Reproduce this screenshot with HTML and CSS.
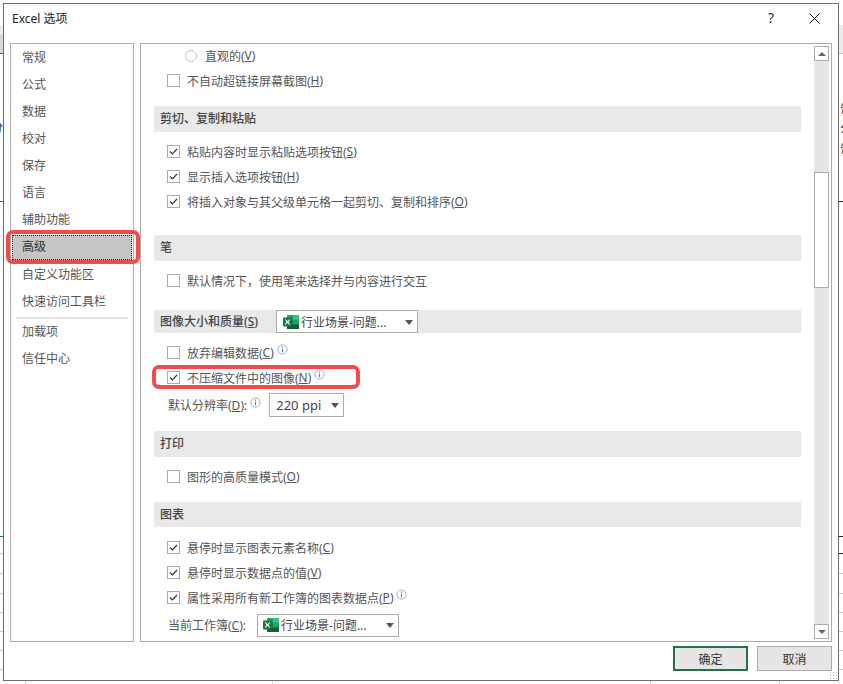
FILE: index.html

```html
<!DOCTYPE html>
<html lang="zh-CN">
<head>
  <meta charset="UTF-8">
  <title>Excel 选项</title>
  <link rel="stylesheet" href="styles.css">
</head>
<body>
  <svg class="defs" width="0" height="0">
    <symbol id="info" viewBox="0 0 11 11">
      <circle cx="5.5" cy="5.5" r="4.6" fill="#fff" stroke="#8fb0de"/>
      <path d="M5.5 2.6v1.2M5.5 4.8v3.4" stroke="#4f7fc4" stroke-width="1.1" fill="none"/>
    </symbol>
    <symbol id="xl" viewBox="0 0 16 16">
      <rect x="4" y="1" width="12" height="14" rx="1" fill="#21a366"/>
      <rect x="10" y="1" width="6" height="4.7" fill="#33c481"/>
      <rect x="4" y="5.7" width="6" height="4.6" fill="#107c41"/>
      <rect x="10" y="10.3" width="6" height="4.7" fill="#185c37"/>
      <rect x="4" y="10.3" width="6" height="4.7" fill="#185c37"/>
      <rect x="0" y="3.5" width="9" height="9" rx="1" fill="#107c41"/>
      <path d="M2.3 5.5l2.2 2.9 2.2-2.9M2.3 10.5l2.2-2.9 2.2 2.9" fill="none" stroke="#fff" stroke-width="1.1"/>
    </symbol>
  </svg>

  <div class="sheet">
    <div class="sheet-sides">
      <div class="edge edge-left">
        <div></div>
        <div class="ribbon-light"></div>
        <div class="ribbon-dark line-green"></div>
        <div class="line-green"><span class="stray stray-left">分</span></div>
        <div class="line-green"></div>
        <div class="line-gray"></div>
        <div class="line-gray"></div>
        <div class="line-gray"></div>
        <div class="line-gray"></div>
        <div class="line-gray"></div>
        <div class="line-gray"></div>
        <div class="line-gray"></div>
      </div>
      <div class="edge edge-right">
        <div></div>
        <div class="ribbon-light"></div>
        <div class="ribbon-light line-gray"></div>
        <div class="line-dark"><span class="stray stray-right">告公告</span></div>
        <div class="line-dark"></div>
        <div class="line-dark"></div>
        <div class="line-gray"></div>
        <div class="line-gray"></div>
        <div class="line-gray"></div>
        <div class="line-gray"></div>
        <div class="line-gray"></div>
        <div class="line-gray"></div>
      </div>
    </div>
    <div class="sheet-ticks"></div>
  </div>

  <div class="dialog">
    <header class="titlebar">
      <span class="title">Excel 选项</span>
      <span class="help">?</span>
      <svg class="close" width="11" height="11" viewBox="0 0 11 11"><path d="M.5.5l10 10M10.5.5l-10 10" stroke="#111" fill="none"/></svg>
    </header>

    <div class="body">
      <nav class="nav">
        <a>常规</a>
        <a>公式</a>
        <a>数据</a>
        <a>校对</a>
        <a>保存</a>
        <a>语言</a>
        <a>辅助功能</a>
        <a class="active"><span>高级</span></a>
        <a class="after-active">自定义功能区</a>
        <a>快速访问工具栏</a>
        <hr>
        <a>加载项</a>
        <a>信任中心</a>
        <i class="mark mark-nav"></i>
      </nav>

      <main class="pane">
        <div class="options">
          <label class="row row-sub"><i class="radio"></i>直观的(<u>V</u>)</label>
          <label class="row"><i class="check"></i>不自动超链接屏幕截图(<u>H</u>)</label>

          <h4 class="section">剪切、复制和粘贴</h4>
          <label class="row"><i class="check on"></i>粘贴内容时显示粘贴选项按钮(<u>S</u>)</label>
          <label class="row"><i class="check on"></i>显示插入选项按钮(<u>H</u>)</label>
          <label class="row"><i class="check on"></i>将插入对象与其父级单元格一起剪切、复制和排序(<u>O</u>)</label>

          <h4 class="section section-pen">笔</h4>
          <label class="row"><i class="check"></i>默认情况下，使用笔来选择并与内容进行交互</label>

          <h4 class="section section-image">
            <span class="section-label">图像大小和质量(<u>S</u>)</span>
            <span class="combo combo-image"><svg class="xl" width="16" height="16"><use href="#xl"/></svg>行业场景-问题...</span>
          </h4>
          <label class="row"><i class="check"></i>放弃编辑数据(<u>C</u>)<svg class="info" width="11" height="11"><use href="#info"/></svg></label>
          <label class="row"><i class="check on"></i>不压缩文件中的图像(<u>N</u>)<svg class="info" width="11" height="11"><use href="#info"/></svg></label>
          <div class="row row-field">默认分辨率(<u>D</u>):<svg class="info" width="11" height="11"><use href="#info"/></svg><span class="combo combo-ppi">220 ppi</span></div>

          <h4 class="section">打印</h4>
          <label class="row"><i class="check"></i>图形的高质量模式(<u>O</u>)</label>

          <h4 class="section section-chart">图表</h4>
          <label class="row"><i class="check on"></i>悬停时显示图表元素名称(<u>C</u>)</label>
          <label class="row"><i class="check on"></i>悬停时显示数据点的值(<u>V</u>)</label>
          <label class="row"><i class="check on"></i>属性采用所有新工作簿的图表数据点(<u>P</u>)<svg class="info" width="11" height="11"><use href="#info"/></svg></label>
          <div class="row row-field row-book">当前工作簿(<u>C</u>):<span class="combo combo-book"><svg class="xl" width="16" height="16"><use href="#xl"/></svg>行业场景-问题...</span></div>
          <i class="mark mark-row"></i>
        </div>

        <div class="scrollbar">
          <span class="arrow-btn"><i class="tri-up"></i></span>
          <span class="thumb"></span>
          <span class="arrow-btn arrow-down"><i class="tri-down"></i></span>
        </div>
      </main>
    </div>

    <footer class="footer">
      <button class="btn btn-ok">确定</button>
      <button class="btn">取消</button>
      <i class="grip"></i>
    </footer>
  </div>
</body>
</html>
```

FILE: styles.css

```css
* {
  box-sizing: border-box;
}

body {
  margin: 0;
  width: 843px;
  height: 684px;
  overflow: hidden;
  background: #fff;
  color: #444;
  font-family: "Noto Sans", "Noto Sans CJK SC", sans-serif;
  font-size: 12px;
}

.defs {
  display: block;
  height: 0;
}

/* the worksheet behind the dialog */
.sheet {
  height: 684px;
}

.sheet-sides {
  display: flex;
  justify-content: space-between;
  height: 681px;
}

.edge {
  display: grid;
  grid-template-rows: 25px 10px 19px 148px 335px 17px 20px 20px 19px 19px 19px 19px;
  overflow: hidden;
}

.edge-left {
  width: 3px;
}

.edge-right {
  width: 4px;
}

.ribbon-light {
  background: #ececec;
}

.ribbon-dark {
  background: #d8d8d8;
}

.line-green {
  border-bottom: 1px solid #217346;
}

.line-gray {
  border-bottom: 1px solid #c8c8c8;
}

.line-dark {
  border-bottom: 1px solid #222;
}

.stray {
  display: block;
  color: #222;
  font-size: 12px;
  line-height: 20px;
}

.stray-left {
  width: 12px;
  margin: 64px 0 0 -9px;
}

.stray-right {
  width: 12px;
  margin: 45px 0 0 1px;
}

.sheet-ticks {
  height: 3px;
  background:
    linear-gradient(#d4d4d4, #d4d4d4) 25px 0 / 1px 100% no-repeat,
    linear-gradient(#d4d4d4, #d4d4d4) 272px 0 / 1px 100% no-repeat,
    linear-gradient(#d4d4d4, #d4d4d4) 650px 0 / 1px 100% no-repeat,
    linear-gradient(#d4d4d4, #d4d4d4) 779px 0 / 1px 100% no-repeat;
}

/* dialog window */
.dialog {
  position: absolute;
  left: 3px;
  top: 3px;
  width: 836px;
  height: 678px;
  display: flex;
  flex-direction: column;
  background: #fff;
  border: 1px solid #6d6d6d;
}

.titlebar {
  display: flex;
  align-items: center;
  height: 39px;
  padding: 0 18px 11px 8px;
  flex: none;
}

.title {
  flex: 1;
  color: #222;
  font-size: 12px;
}

.help {
  margin: -1px 35px 0 0;
  color: #333;
  font-size: 14px;
}

.close {
  display: block;
}

.body {
  display: flex;
  gap: 6px;
  height: 599px;
  padding: 0 6px;
  flex: none;
}

/* left category list */
.nav {
  position: relative;
  width: 124px;
  flex: none;
  padding: 1px;
  border: 1px solid #ababab;
}

.nav a {
  display: block;
  height: 27px;
  padding-left: 10px;
  line-height: 26px;
  color: #555;
}

.nav hr {
  height: 2px;
  margin: 1px 4px 0;
  border: 0;
  background: #e6e6e6;
}

.nav .active {
  height: 25px;
  margin-top: 1px;
  padding: 0;
  background: #c6c5c3;
  color: #333;
}

.nav .active span {
  display: block;
  height: 100%;
  padding-left: 9px;
  line-height: 22px;
  border: 1px dotted #222;
}

.nav .after-active {
  margin-top: 2px;
}

.mark {
  position: absolute;
  border: 4px solid #f04c4c;
  border-radius: 7px;
}

.mark-nav {
  left: -5px;
  top: 186px;
  width: 134px;
  height: 34px;
}

/* right options pane */
.pane {
  position: relative;
  flex: 1;
  border: 1px solid #ababab;
  overflow: hidden;
}

.options {
  position: relative;
  width: 660px;
  padding-left: 13px;
}

.row {
  display: flex;
  align-items: center;
  height: 25px;
  padding: 0 0 2px 13px;
  color: #555;
  white-space: nowrap;
}

.row-sub {
  padding-left: 31px;
}

.row-field {
  height: 28px;
  padding: 0 0 0 14px;
}

.row-book {
  height: 28px;
}

.check {
  width: 13px;
  height: 13px;
  margin-right: 7px;
  border: 1px solid #ababab;
  background: #fff;
  flex: none;
}

.check.on {
  background: no-repeat center / 9px 9px url("data:image/svg+xml,%3Csvg xmlns='http://www.w3.org/2000/svg' viewBox='0 0 9 9'%3E%3Cpath d='M1 4.5l2.4 2.4L8 2' fill='none' stroke='%23333' stroke-width='1.2'/%3E%3C/svg%3E");
}

.radio {
  width: 12px;
  height: 12px;
  margin-right: 8px;
  border: 1px solid #c4c4c4;
  border-radius: 50%;
  flex: none;
}

.info {
  margin: -6px 0 0 3px;
  flex: none;
}

.section {
  display: flex;
  align-items: center;
  height: 26px;
  margin: 12px 0 8px;
  padding: 0 0 2px 6px;
  width: 647px;
  background: #e9e9e9;
  color: #444;
  font-size: 12px;
  font-weight: 500;
}

.section-pen {
  margin-top: 20px;
}

.section-image {
  height: 23px;
  margin-top: 16px;
  padding-bottom: 0;
}

.section-chart {
  height: 25px;
  margin-bottom: 9px;
}

.section-label {
  width: 116px;
  padding-bottom: 2px;
  flex: none;
}

.combo {
  position: relative;
  display: flex;
  align-items: center;
  background: #fff;
  border: 1px solid #ababab;
  color: #444;
  font-weight: 400;
  white-space: nowrap;
}

.combo::after {
  content: "";
  position: absolute;
  right: 4px;
  top: 50%;
  margin-top: -2px;
  border: 4px solid transparent;
  border-top: 5px solid #555;
  border-bottom: 0;
}

.combo-image {
  width: 142px;
  height: 23px;
  padding-left: 6px;
}

.combo-ppi {
  width: 75px;
  height: 24px;
  margin-left: 8px;
  padding-left: 6px;
  font-size: 13px;
}

.combo-book {
  width: 142px;
  height: 23px;
  margin-left: 11px;
  padding-left: 5px;
}

.xl {
  margin-right: 2px;
  flex: none;
}

.mark-row {
  left: 11px;
  top: 321px;
  width: 208px;
  height: 24px;
}

.scrollbar {
  position: absolute;
  right: 2px;
  top: 2px;
  bottom: 2px;
  width: 15px;
  background: #e6e6e6;
}

.arrow-btn {
  display: flex;
  align-items: center;
  justify-content: center;
  width: 15px;
  height: 15px;
  background: #fff;
  border: 1px solid #ababab;
}

.arrow-down {
  position: absolute;
  bottom: 0;
}

.tri-up {
  border: 4px solid transparent;
  border-bottom: 4px solid #666;
  border-top: 0;
}

.tri-down {
  border: 4px solid transparent;
  border-top: 4px solid #666;
  border-bottom: 0;
}

.thumb {
  position: absolute;
  left: 0;
  top: 126px;
  width: 15px;
  height: 116px;
  background: #fff;
  border: 1px solid #ababab;
}

/* bottom buttons */
.footer {
  position: relative;
  display: flex;
  justify-content: flex-end;
  gap: 9px;
  flex: 1;
  padding: 4px 6px 0 0;
}

.btn {
  width: 75px;
  height: 25px;
  padding: 0;
  background: #e6e6e6;
  border: 1px solid #ababab;
  color: #333;
  font: inherit;
}

.btn-ok {
  border: 2px solid #217346;
}

.grip {
  position: absolute;
  right: 1px;
  bottom: 1px;
  width: 8px;
  height: 8px;
  background: radial-gradient(circle, #b0b0b0 1px, transparent 1px) 0 0 / 3px 3px;
}
```
